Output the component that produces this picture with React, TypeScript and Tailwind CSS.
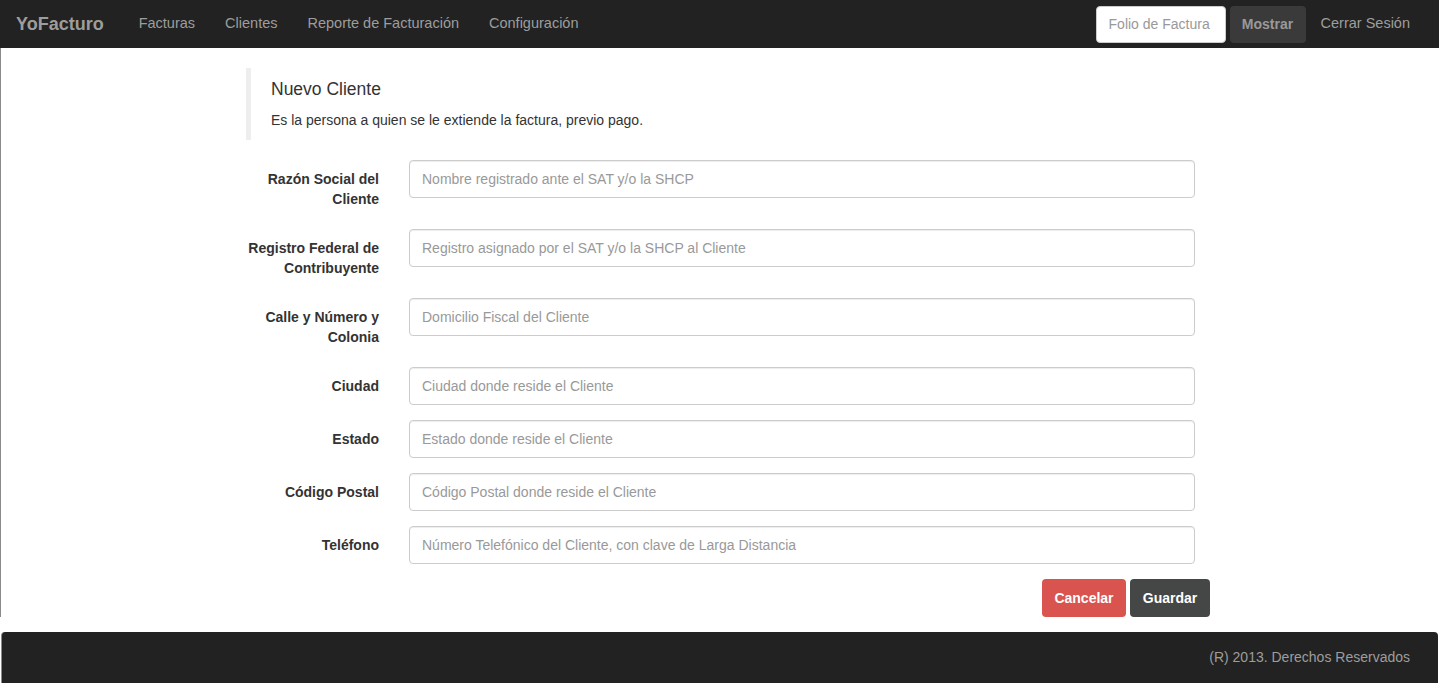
const fields = [
  { label: 'Razón Social del Cliente', placeholder: 'Nombre registrado ante el SAT y/o la SHCP', tall: true },
  { label: 'Registro Federal de Contribuyente', placeholder: 'Registro asignado por el SAT y/o la SHCP al Cliente', tall: true },
  { label: 'Calle y Número y Colonia', placeholder: 'Domicilio Fiscal del Cliente', tall: true },
  { label: 'Ciudad', placeholder: 'Ciudad donde reside el Cliente' },
  { label: 'Estado', placeholder: 'Estado donde reside el Cliente' },
  { label: 'Código Postal', placeholder: 'Código Postal donde reside el Cliente' },
  { label: 'Teléfono', placeholder: 'Número Telefónico del Cliente, con clave de Larga Distancia' },
];

const navLinks = ['Facturas', 'Clientes', 'Reporte de Facturación', 'Configuración'];

export default function App() {
  return (
    <div className="min-h-[683px] bg-white text-[14px] text-[#333] font-['Liberation_Sans',Arial,sans-serif] flex flex-col">
      {/* Navbar */}
      <nav className="h-[48px] bg-[#222] flex items-center pl-[16px] pr-[29px]">
        <span className="text-[18px] font-bold text-[#9d9d9d] mr-[20px]">YoFacturo</span>
        <ul className="flex">
          {navLinks.map((l) => (
            <li key={l} className="px-[15px] text-[14.5px] text-[#9d9d9d]">
              {l}
            </li>
          ))}
        </ul>
        <div className="ml-auto flex items-center">
          <input
            type="text"
            placeholder="Folio de Factura"
            className="w-[130px] h-[37px] rounded-[4px] bg-white border border-[#ccc] px-[12px] text-[14px] placeholder:text-[#999] outline-none"
          />
          <button
            type="button"
            className="ml-[4px] w-[76px] h-[37px] rounded-[4px] bg-[#3a3a3a] text-[#999] font-bold"
          >
            Mostrar
          </button>
          <span className="ml-[15px] text-[14.5px] text-[#9d9d9d]">Cerrar Sesión</span>
        </div>
      </nav>

      {/* Content */}
      <main className="flex-1 border-l border-[#8a8a8a] pt-[20px]">
        <div className="ml-[230px] w-[979px]">
          <div className="px-[15px]">
            <blockquote className="border-l-[5px] border-[#eee] pl-[20px] pt-[10px] pb-[10px] mb-[20px]">
              <h4 className="text-[17.5px] leading-[22px] mb-[10px]">Nuevo Cliente</h4>
              <p className="leading-[20px]">Es la persona a quien se le extiende la factura, previo pago.</p>
            </blockquote>
          </div>

          <form>
            {fields.map((f) => (
              <div key={f.label} className={`flex mb-[15px] ${f.tall ? 'h-[54px]' : ''}`}>
                <label className="w-[163px] px-[15px] pt-[9px] pb-[5px] text-right font-bold leading-[20px]">
                  {f.label}
                </label>
                <div className="flex-1 px-[15px]">
                  <input
                    type="text"
                    placeholder={f.placeholder}
                    className="w-full h-[38px] rounded-[4px] border border-[#ccc] px-[12px] text-[14px] placeholder:text-[#999] outline-none shadow-[inset_0_1px_1px_rgba(0,0,0,0.075)]"
                  />
                </div>
              </div>
            ))}
            <div className="flex justify-end gap-[4px]">
              <button type="button" className="w-[84px] h-[38px] rounded-[4px] bg-[#d9534f] text-white font-bold">
                Cancelar
              </button>
              <button type="button" className="w-[80px] h-[38px] rounded-[4px] bg-[#454646] text-white font-bold">
                Guardar
              </button>
            </div>
          </form>
        </div>
      </main>

      {/* Footer */}
      <footer className="mt-[15px] h-[51px] bg-[#222] rounded-t-[4px] ml-[1px] mr-[1px] flex items-center justify-end pr-[28px] text-[#9d9d9d] border-l border-[#8a8a8a]">
        (R) 2013. Derechos Reservados
      </footer>
    </div>
  );
}
